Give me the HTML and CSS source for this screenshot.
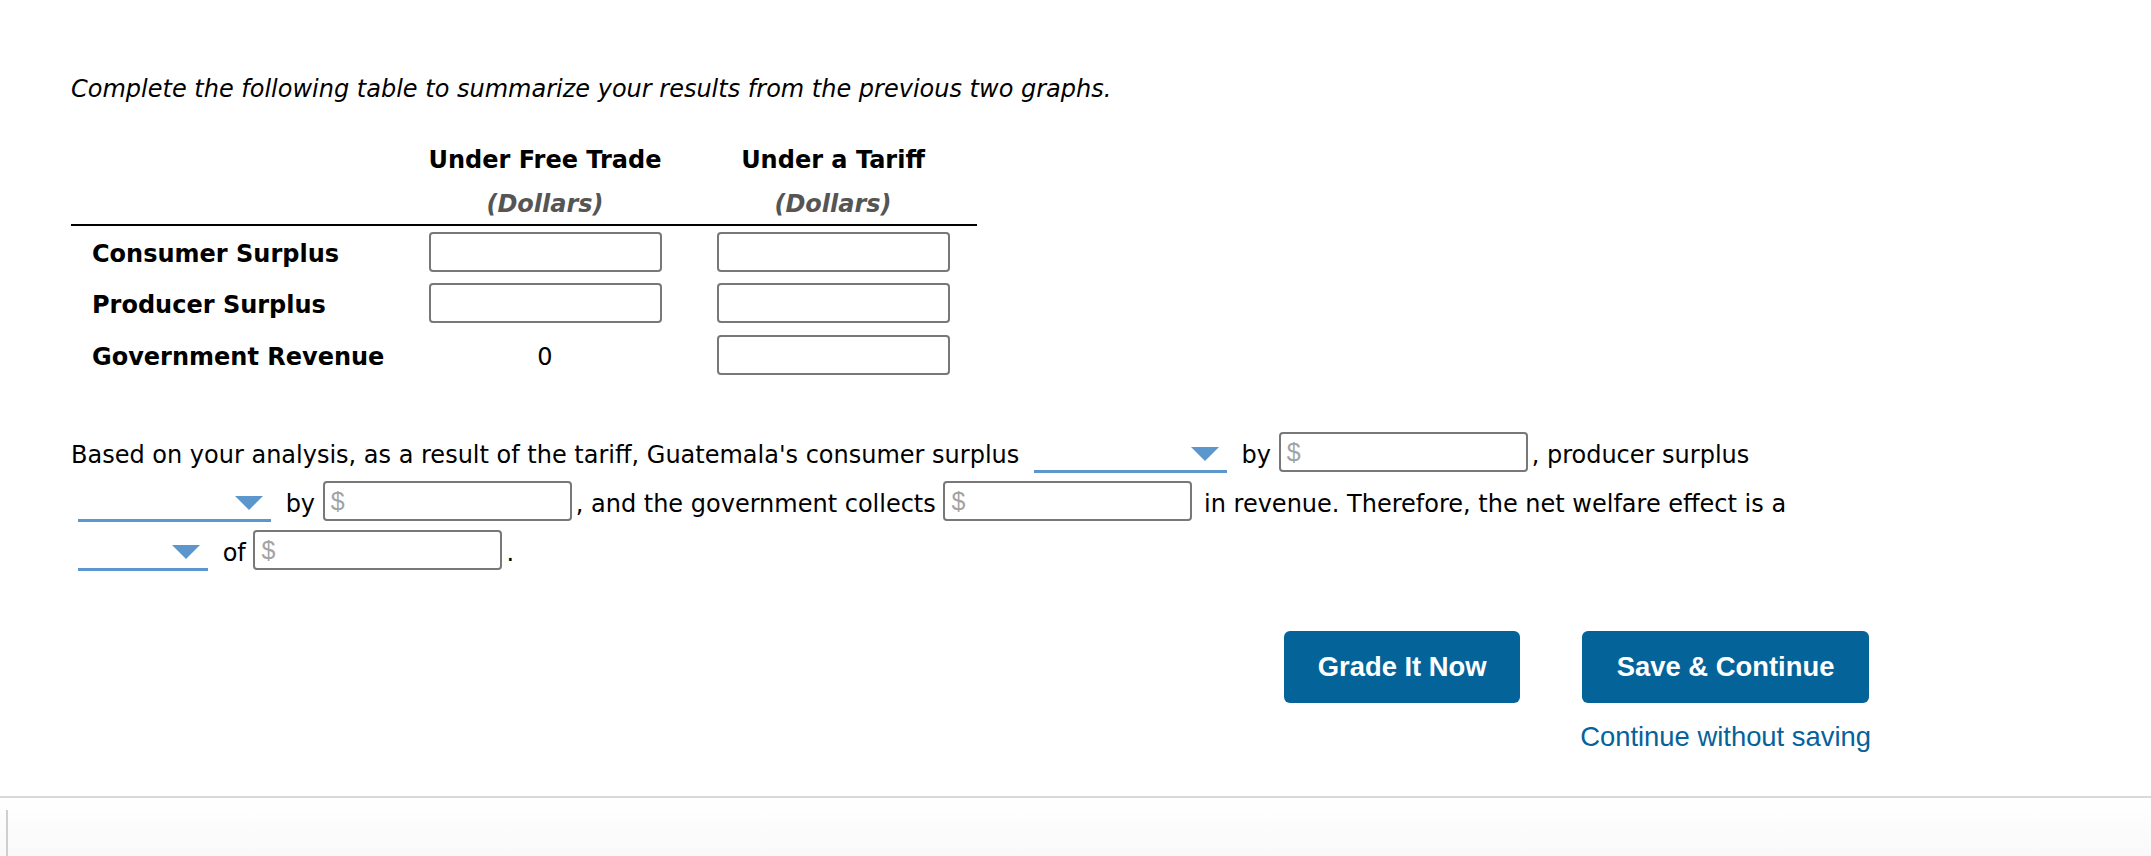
FILE: index.html
```html
<!DOCTYPE html>
<html lang="en">
<head>
<meta charset="utf-8">
<title>Tariff summary</title>
<link rel="stylesheet" href="styles.css">
</head>
<body>
<main class="page">
  <p class="prompt">Complete the following table to summarize your results from the previous two graphs.</p>

  <table class="summary">
    <thead>
      <tr class="head-main"><th class="label-col"></th><th>Under Free Trade</th><th>Under a Tariff</th></tr>
      <tr class="head-unit"><th class="label-col"></th><th>(Dollars)</th><th>(Dollars)</th></tr>
    </thead>
    <tbody>
      <tr><th class="row-label">Consumer Surplus</th><td><input class="cell-input" type="text"></td><td><input class="cell-input" type="text"></td></tr>
      <tr><th class="row-label">Producer Surplus</th><td><input class="cell-input" type="text"></td><td><input class="cell-input" type="text"></td></tr>
      <tr><th class="row-label">Government Revenue</th><td class="value">0</td><td><input class="cell-input" type="text"></td></tr>
    </tbody>
  </table>

  <p class="analysis">Based on your analysis, as a result of the tariff, Guatemala's consumer surplus <span class="dropdown wide"><svg class="caret" viewBox="0 0 28 14" width="28" height="14"><polygon points="0,0 28,0 14,14"/></svg></span> by <span class="money"><span class="dollar">$</span><input class="money-input" type="text"></span>, producer surplus <span class="dropdown wide"><svg class="caret" viewBox="0 0 28 14" width="28" height="14"><polygon points="0,0 28,0 14,14"/></svg></span> by <span class="money"><span class="dollar">$</span><input class="money-input" type="text"></span>, and the government collects <span class="money"><span class="dollar">$</span><input class="money-input" type="text"></span> in revenue. Therefore, the net welfare effect is a <span class="dropdown narrow"><svg class="caret" viewBox="0 0 28 14" width="28" height="14"><polygon points="0,0 28,0 14,14"/></svg></span> of <span class="money"><span class="dollar">$</span><input class="money-input" type="text"></span>.</p>

  <div class="actions">
    <button class="btn" type="button">Grade It Now</button>
    <div class="save-group">
      <button class="btn" type="button">Save &amp; Continue</button>
      <a class="skip" href="#">Continue without saving</a>
    </div>
  </div>
</main>
<footer class="footer">
  <div class="editor"></div>
</footer>
</body>
</html>
```

FILE: styles.css
```css
html, body {
  margin: 0;
  padding: 0;
  background: #ffffff;
}

body {
  font-family: "DejaVu Sans", Verdana, sans-serif;
  font-size: 24px;
  color: #000;
}

.page {
  padding: 75px 0 0 71px;
}

.prompt {
  margin: 0;
  font-style: italic;
  line-height: 28px;
}

.summary {
  margin-top: 34px;
  border-collapse: collapse;
  border-spacing: 0;
}

.summary th,
.summary td {
  padding: 0;
}

.label-col,
.row-label {
  width: 330px;
}

.summary thead th {
  width: 288px;
  text-align: center;
  font-weight: bold;
  padding-top: 2px;
  box-sizing: border-box;
}

.summary thead th.label-col {
  width: 330px;
}

.head-main th {
  height: 44px;
}

.head-unit th {
  height: 44px;
  font-style: italic;
  color: #555;
  border-bottom: 2px solid #000;
}

.summary tbody tr {
  height: 52px;
}

.row-label {
  text-align: left;
  font-weight: bold;
  padding: 4px 0 0 21px !important;
  box-sizing: border-box;
}

.summary tbody td {
  text-align: center;
  vertical-align: middle;
}

.summary tbody td.value {
  padding-top: 4px;
}

.cell-input {
  box-sizing: border-box;
  width: 233px;
  height: 40px;
  border: 2px solid #787878;
  border-radius: 4px;
  padding: 0 8px;
  font: inherit;
  display: block;
  margin: 0 auto;
  background: #fff;
}

.value {
  font-weight: normal;
}

.analysis {
  margin: 50px 0 0 0;
  width: 1810px;
  line-height: 48.5px;
}

.dropdown {
  display: inline-flex;
  box-sizing: border-box;
  height: 36px;
  align-items: center;
  justify-content: flex-end;
  padding: 1px 8px 0 0;
  margin: 0 7px 2px;
  border-bottom: 3px solid #5b96cd;
  vertical-align: middle;
}

.dropdown.wide {
  width: 193px;
}

.dropdown.narrow {
  width: 130px;
}

.caret {
  display: block;
  fill: #5b96cd;
}

.money {
  display: inline-flex;
  align-items: center;
  box-sizing: border-box;
  width: 249px;
  height: 40px;
  border: 2px solid #787878;
  border-radius: 4px;
  margin: 0 4px 8px 0;
  padding-left: 6px;
  vertical-align: middle;
  background: #fff;
}

.dollar {
  font-family: "Liberation Sans", Arial, sans-serif;
  font-size: 25px;
  color: #a3a3a3;
  line-height: 1;
}

.money-input {
  flex: 1;
  min-width: 0;
  border: 0;
  outline: 0;
  background: transparent;
  font: inherit;
  padding: 0 4px;
  height: 100%;
}

.actions {
  display: flex;
  justify-content: flex-end;
  align-items: flex-start;
  gap: 60px;
  margin-top: 53px;
  padding-right: 280px;
}

.btn {
  height: 72px;
  border: 0;
  border-radius: 6px;
  background: #04649a;
  color: #fff;
  font-family: "Liberation Sans", Arial, sans-serif;
  font-weight: bold;
  font-size: 27.4px;
  padding: 0;
  cursor: pointer;
}

.actions > .btn {
  width: 236px;
}

.save-group .btn {
  width: 287px;
}

.save-group {
  display: flex;
  flex-direction: column;
  align-items: center;
  gap: 18px;
}

.skip {
  font-family: "Liberation Sans", Arial, sans-serif;
  font-size: 27.4px;
  line-height: 32px;
  color: #05629a;
  text-decoration: none;
}

.footer {
  margin-top: 43px;
  border-top: 2px solid #d6dadd;
  height: 58px;
  background: linear-gradient(#ffffff, #f9f9f9);
}

.editor {
  margin: 12px 0 0 6px;
  height: 46px;
  border-left: 2px solid #cfcfcf;
}
```
